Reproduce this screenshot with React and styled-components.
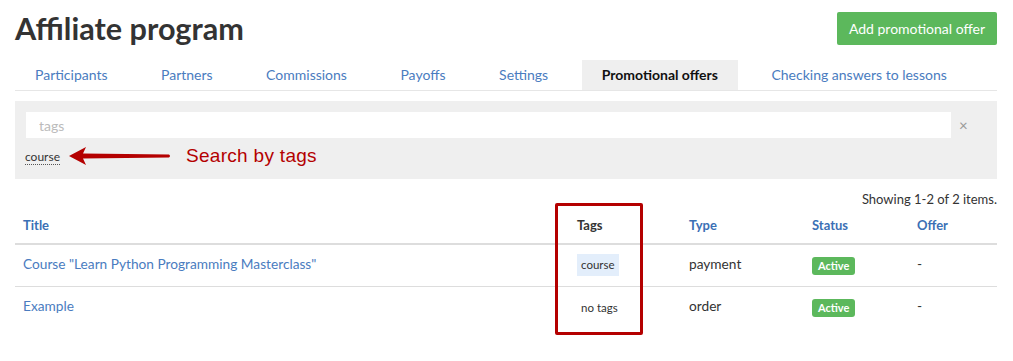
import React from 'react';
import styled, { createGlobalStyle } from 'styled-components';

const GlobalStyle = createGlobalStyle`
  body {
    margin: 0;
    background: #fff;
    font-family: Lato, "Open Sans", sans-serif;
    color: #333;
  }
`

const Page = styled.div`
  min-height: 361px;
  box-sizing: border-box;
  padding: 0 16px 0 15px;
`

const Header = styled.div`
  display: flex;
  justify-content: space-between;
  align-items: flex-start;
  padding-top: 12px;
`

const Title = styled.h1`
  margin: 0;
  font-size: 30.6px;
  line-height: 34px;
  font-weight: 700;
  color: #333;
`

const AddButton = styled.button`
  height: 33px;
  padding: 0 12px;
  border: none;
  border-radius: 2px;
  background: #5cb85c;
  color: #fff;
  font-family: Lato, sans-serif;
  font-size: 14px;
  cursor: pointer;
`

const Tabs = styled.ul`
  display: flex;
  list-style: none;
  margin: 14px 0 0;
  padding: 0;
  border-bottom: 1px solid #e6e6e6;
`

const Tab = styled.li`
  height: 30px;
  line-height: 29px;
  padding: 0 20px;
  margin-right: 13.5px;
  font-size: 14px;
  color: ${({ active }) => (active ? '#111' : '#4a7cc0')};
  font-weight: ${({ active }) => (active ? 700 : 400)};
  background: ${({ active }) => (active ? '#efefef' : 'transparent')};
`

const Filter = styled.div`
  margin-top: 10px;
  background: #efefef;
  padding: 11px 0 7px 11px;
`

const InputRow = styled.div`
  display: flex;
  align-items: center;
`

const Input = styled.input`
  flex: 1;
  height: 26px;
  border: none;
  outline: none;
  padding: 0 13px;
  font-family: Lato, sans-serif;
  font-size: 14px;
  background: #fff;
  &::placeholder {
    color: #bbb;
  }
`

const Clear = styled.span`
  width: 38px;
  padding-left: 8px;
  color: #999;
  font-size: 15px;
`

const TagRow = styled.div`
  display: flex;
  align-items: center;
  height: 34px;
  padding-top: 2px;
  box-sizing: border-box;
`

const FilterTag = styled.span`
  margin-left: -1px;
  font-size: 12px;
  color: #333;
  border-bottom: 1px dotted #555;
  line-height: 14px;
  margin-top: 3px;
`

const Arrow = styled.svg`
  margin-left: 9px;
`

const Annotation = styled.span`
  margin-left: 15px;
  font-family: "Liberation Sans", Arial, sans-serif;
  font-size: 19px;
  letter-spacing: 0.3px;
  color: #b40000;
`

const Summary = styled.div`
  text-align: right;
  font-size: 13px;
  margin-top: 12px;
  color: #333;
`

const TableWrap = styled.div`
  position: relative;
`

const Row = styled.div`
  display: grid;
  grid-template-columns: 554px 112px 123px 105px 1fr;
  align-items: center;
  box-sizing: border-box;
  height: ${({ head }) => (head ? '38px' : '42px')};
  padding-bottom: ${({ head }) => (head ? '0' : '1px')};
  border-bottom: ${({ head, last }) =>
    head ? '2px solid #ddd' : last ? 'none' : '1px solid #ddd'};
`

const Cell = styled.div`
  padding-left: 8px;
  font-size: ${({ head }) => (head ? '13px' : '13.7px')};
  font-weight: ${({ head }) => (head ? 700 : 400)};
  color: ${({ head, dark }) => (dark ? '#333' : head ? '#3b70b5' : '#333')};
`

const Text = styled.span`
  position: relative;
  top: -2px;
`

const Link = styled.a`
  position: relative;
  top: -2px;
  color: #4a7cc0;
  text-decoration: none;
`

const TagChip = styled.span`
  display: inline-block;
  padding: 0 4px;
  line-height: 22px;
  font-size: 11.5px;
  color: #333;
  background: ${({ empty }) => (empty ? 'transparent' : '#e3eefb')};
`

const Badge = styled.span`
  display: inline-block;
  padding: 0 6px;
  line-height: 18px;
  border-radius: 3px;
  background: #5cb85c;
  color: #fff;
  font-size: 11px;
  font-weight: 700;
`

const Highlight = styled.div`
  position: absolute;
  left: 540px;
  top: -4px;
  width: 82px;
  height: 126px;
  border: 3px solid #b40000;
  border-radius: 2px;
`

const rows = [
  { title: 'Course "Learn Python Programming Masterclass"', tag: 'course', type: 'payment' },
  { title: 'Example', tag: null, type: 'order' },
];

export default function App() {
  return (
    <Page>
      <GlobalStyle />
      <Header>
        <Title>Affiliate program</Title>
        <AddButton>Add promotional offer</AddButton>
      </Header>
      <Tabs>
        <Tab>Participants</Tab>
        <Tab>Partners</Tab>
        <Tab>Commissions</Tab>
        <Tab>Payoffs</Tab>
        <Tab>Settings</Tab>
        <Tab active>Promotional offers</Tab>
        <Tab>Checking answers to lessons</Tab>
      </Tabs>
      <Filter>
        <InputRow>
          <Input placeholder="tags" />
          <Clear>×</Clear>
        </InputRow>
        <TagRow>
          <FilterTag>course</FilterTag>
          <Arrow width="102" height="20" viewBox="0 0 102 20">
            <path d="M0 10 L17 1 L14 7.5 L100 8.5 Q102 10 100 11.5 L14 12.5 L17 19 Z" fill="#b40000" />
          </Arrow>
          <Annotation>Search by tags</Annotation>
        </TagRow>
      </Filter>
      <Summary>Showing 1-2 of 2 items.</Summary>
      <TableWrap>
        <Row head>
          <Cell head>Title</Cell>
          <Cell head dark>Tags</Cell>
          <Cell head>Type</Cell>
          <Cell head>Status</Cell>
          <Cell head>Offer</Cell>
        </Row>
        {rows.map((r, i) => (
          <Row key={r.title} last={i === rows.length - 1}>
            <Cell><Link href="#">{r.title}</Link></Cell>
            <Cell>
              {r.tag ? <TagChip>{r.tag}</TagChip> : <TagChip empty>no tags</TagChip>}
            </Cell>
            <Cell><Text>{r.type}</Text></Cell>
            <Cell><Badge>Active</Badge></Cell>
            <Cell><Text>-</Text></Cell>
          </Row>
        ))}
        <Highlight />
      </TableWrap>
    </Page>
  );
}
